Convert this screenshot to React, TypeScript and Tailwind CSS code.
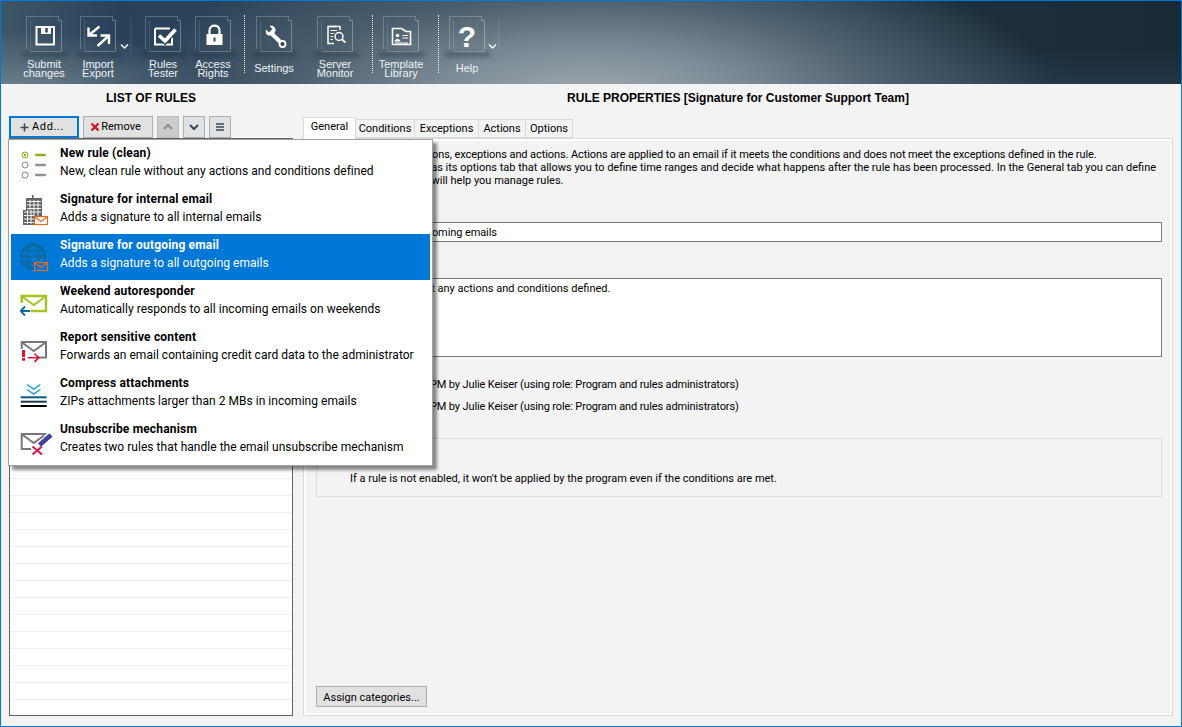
const font = "font-['Roboto',sans-serif]"

function Frame({ children }: { children?: React.ReactNode }) {
  return (
    <div className="relative h-[36px] w-[36px]">
      <svg width="36" height="42" viewBox="0 0 36 42" className="block" fill="none">
        <path d="M0.5 33V0.5H32.5" stroke="#fff" strokeOpacity="0.22" />
        <path d="M32.5 0.5V4.5" stroke="#fff" strokeOpacity="0.22" />
        <path d="M4.5 35.5H35.5V4.5H32.5" stroke="#fff" strokeOpacity="0.3" />
        <path d="M4.5 4.5V35.5" stroke="#fff" strokeOpacity="0.12" />
        {children}
      </svg>
      <div className="absolute left-[-4px] top-[36px] h-[5px] w-[46px] rounded-full bg-[#1c2f40]/40 blur-[2px]" />
    </div>
  )
}

function ToolButton({ w, label, children, ml = '' }: { w: string; label: string[]; children?: React.ReactNode; ml?: string }) {
  return (
    <div className={`flex flex-col items-center ${w} ${ml}`}>
      <Frame>{children}</Frame>
      <div className={`flex h-[20px] flex-col items-center justify-center font-['Liberation_Sans',sans-serif] text-[11px] leading-[9px] text-[#eef2f5] whitespace-nowrap ${label.length === 1 ? 'mt-[6px]' : 'mt-[7px]'}`}>
        {label.map((l) => (
          <span key={l} className="block h-[9px]">{l}</span>
        ))}
      </div>
    </div>
  )
}

function Chevron({ className }: { className: string }) {
  return (
    <svg width="16" height="36" viewBox="0 0 16 36" className={className} fill="none">
      <path d="M15 2V36" stroke="#fff" strokeOpacity="0.12" />
      <path d="M5 28.5L8.5 32L12 28.5" stroke="#fff" strokeWidth="1.3" />
    </svg>
  )
}

function Dots({ className }: { className: string }) {
  return <div className={`h-[58px] w-0 border-l border-dotted border-white/90 ${className}`} />
}

function Toolbar() {
  return (
    <div className="flex h-[83px] items-start bg-[#1a2a36] bg-[radial-gradient(ellipse_470px_160px_at_590px_100px,#a3adb5_0%,#7a8994_35%,#4b5e6d_65%,#4b5e6d00_100%),radial-gradient(ellipse_240px_60px_at_0px_90px,#71848f_0%,#71848f00_100%),linear-gradient(to_bottom,#1a2a3600_0%,#1a2a3600_55%,#2a405580_100%),linear-gradient(to_right,#3f5668_0%,#29425a_10%,#2f4558_30%,#34495a_50%,#1f3342_72%,#1a2a36_100%)] pl-[16px] pt-[15px]">
      <ToolButton w="w-[54px]" label={['Submit', 'changes']}>
        <path d="M10.5 11H28V28.5H10.5Z" stroke="#fff" strokeWidth="2" />
        <path d="M15 10.5H25V18H15Z" fill="#fff" />
        <path d="M20.5 12V16.5" stroke="#2f4659" strokeWidth="2.5" />
      </ToolButton>
      <ToolButton w="w-[54px]" label={['Import', 'Export']}>
        <path d="M8.5 11.5V19.5H17M8.5 19.5L19.5 10.5" stroke="#fff" strokeWidth="2.4" />
        <path d="M20.5 19.5H29V28M29 19.5L17.5 30" stroke="#fff" strokeWidth="2.4" />
      </ToolButton>
      <Chevron className="ml-[-9px]" />
      <ToolButton w="w-[46px]" ml="ml-[8px]" label={['Rules', 'Tester']}>
        <path d="M10 12.5H25M10 12.5V28.5H27V19" stroke="#fff" strokeWidth="2" />
        <path d="M14 19.5L20 25L30.5 13.5" stroke="#2f4659" strokeWidth="6.5" />
        <path d="M14 19.5L20 25L30.5 13.5" stroke="#fff" strokeWidth="3.6" />
      </ToolButton>
      <ToolButton w="w-[46px]" ml="ml-[4px]" label={['Access', 'Rights']}>
        <rect x="11.5" y="18" width="16" height="11" fill="#fff" />
        <path d="M14.5 18.5V14.5C14.5 8 24.5 8 24.5 14.5V18.5" stroke="#fff" strokeWidth="2.2" />
        <rect x="18.5" y="21.5" width="2" height="4" fill="#2f4659" />
      </ToolButton>
      <Dots className="ml-[8px] mt-[-1px]" />
      <ToolButton w="w-[46px]" ml="ml-[6px]" label={['Settings']}>
        <path d="M15 17L26.5 28" stroke="#fff" strokeWidth="4" />
        <path d="M10 13.5L13 16.5L16.5 13L13.5 10C16.5 9 20 11 19.5 15L18 18L14 19.5C11 20 9 17 10 13.5Z" fill="#fff" />
        <circle cx="26.5" cy="28" r="3" stroke="#fff" strokeWidth="1.8" fill="#2f4659" />
      </ToolButton>
      <ToolButton w="w-[46px]" ml="ml-[15px]" label={['Server', 'Monitor']}>
        <path d="M19 10.5H11V27.5H17" stroke="#fff" strokeWidth="1.5" />
        <path d="M11 10.5H23V14" stroke="#fff" strokeWidth="1.5" />
        <path d="M13.5 14.5H20M13.5 17.5H17M13.5 20.5H16M13.5 23.5H16" stroke="#fff" strokeWidth="1.2" />
        <circle cx="22" cy="20.5" r="4" stroke="#fff" strokeWidth="1.5" />
        <path d="M25 23.5L28.5 26.5" stroke="#fff" strokeWidth="1.8" />
      </ToolButton>
      <Dots className="ml-[14px] mt-[-1px]" />
      <ToolButton w="w-[50px]" ml="ml-[3px]" label={['Template', 'Library']}>
        <path d="M9.5 12.5H18.5L23 15.5H27.5V28.5H9.5Z" stroke="#fff" strokeWidth="1.6" />
        <circle cx="14.5" cy="19.5" r="1.8" fill="#fff" />
        <path d="M11.5 25.5C11.5 22 17.5 22 17.5 25.5Z" fill="#fff" />
        <path d="M19.5 19.5H25M19.5 22H25M12 27H25" stroke="#fff" strokeWidth="1.1" />
      </ToolButton>
      <Dots className="ml-[12px] mt-[-1px]" />
      <ToolButton w="w-[38px]" ml="ml-[9px]" label={['Help']}>
        <text x="18" y="31" textAnchor="middle" fill="#fff" fontSize="30" fontWeight="700" fontFamily="Liberation Sans, sans-serif">?</text>
      </ToolButton>
      <Chevron className="ml-[-2px]" />
    </div>
  )
}

function IconClean() {
  return (
    <svg width="32" height="32" viewBox="0 0 32 32" fill="none">
      <circle cx="5" cy="5" r="3" stroke="#8fb01a" strokeWidth="1" />
      <circle cx="5" cy="5" r="1.2" fill="#8fb01a" />
      <rect x="15" y="3.7" width="11" height="2.6" rx="1.3" fill="#8fb01a" />
      <circle cx="5" cy="15" r="3" stroke="#888" strokeWidth="1" />
      <rect x="15" y="13.7" width="11" height="2.6" rx="1.3" fill="#909090" />
      <circle cx="5" cy="25" r="3" stroke="#888" strokeWidth="1" />
      <rect x="15" y="23.7" width="11" height="2.6" rx="1.3" fill="#909090" />
    </svg>
  )
}

function IconBuilding() {
  return (
    <svg width="32" height="32" viewBox="0 0 32 32" fill="none" className="overflow-visible">
      <rect x="12" y="-1" width="1.6" height="3" fill="#666" />
      <path d="M6 2H22V21H15V29H3V14H6Z" fill="#666" />
      <path d="M7 5.5H21M7 9H21M7 12.5H21M4 16H21M4 19.5H14M4 23H14M4 26.5H14M10 4V14M14 4V20M18 4V20M7.5 14V28M11 14V28" stroke="#fff" strokeWidth="0.9" />
      <rect x="14.5" y="20.5" width="13" height="8" fill="#fff" stroke="#e8681e" strokeWidth="1.2" />
      <path d="M15 21L21 25.5L27 21" stroke="#e8681e" strokeWidth="1.2" />
    </svg>
  )
}

function IconGlobe() {
  return (
    <svg width="32" height="32" viewBox="0 0 32 32" fill="none">
      <circle cx="13" cy="14.5" r="12" stroke="#0b6a9a" strokeWidth="2.4" />
      <ellipse cx="13" cy="14.5" rx="5.5" ry="12" stroke="#0b6a9a" strokeWidth="1.8" />
      <path d="M1 14.5H25M3 8.5H23M3 20.5H23" stroke="#0b6a9a" strokeWidth="1.8" />
      <rect x="14.5" y="20.5" width="13" height="8" fill="#0078d7" stroke="#e8681e" strokeWidth="1.2" />
      <path d="M15 21L21 25.5L27 21" stroke="#e8681e" strokeWidth="1.2" />
    </svg>
  )
}

function IconReply() {
  return (
    <svg width="32" height="32" viewBox="0 0 32 32" fill="none">
      <path d="M1.7 15V8H26V23H11" stroke="#a5c31e" strokeWidth="2.4" />
      <path d="M2 8.5L13.8 17L25.5 8.5" stroke="#a5c31e" strokeWidth="2" />
      <path d="M0.5 23H10M0.5 23L5 18.5M0.5 23L5 27.5" stroke="#0b6a9a" strokeWidth="1.8" />
    </svg>
  )
}

function IconReport() {
  return (
    <svg width="32" height="32" viewBox="0 0 32 32" fill="none">
      <path d="M1.7 15V8H26V23.5H18" stroke="#777" strokeWidth="2" />
      <path d="M2 8.5L13.8 17L25.5 8.5" stroke="#777" strokeWidth="2" />
      <rect x="2" y="16" width="3" height="7" fill="#e8112d" />
      <rect x="2" y="24" width="3" height="2.7" fill="#e8112d" />
      <path d="M8 23.7H18.5M14.5 19.5L18.7 23.7L14.5 27.9" stroke="#e8112d" strokeWidth="1.6" />
    </svg>
  )
}

function IconCompress() {
  return (
    <svg width="32" height="32" viewBox="0 0 32 32" fill="none">
      <path d="M7 4.5L13.7 9L20.4 4.5M7 9.5L13.7 14L20.4 9.5" stroke="#1a9ad6" strokeWidth="1.5" />
      <path d="M0.7 17.3H26.7" stroke="#0b5a80" strokeWidth="2" />
      <path d="M0.7 21.7H26.7" stroke="#1c3a52" strokeWidth="2" />
      <path d="M0.7 26H26.7" stroke="#000" strokeWidth="2" />
    </svg>
  )
}

function IconUnsubscribe() {
  return (
    <svg width="32" height="32" viewBox="0 0 32 32" fill="none" className="overflow-visible">
      <path d="M11 23H1.7V8H26" stroke="#777" strokeWidth="2" />
      <path d="M2 8.5L13.8 17L24 9.5" stroke="#777" strokeWidth="2" />
      <path d="M19.5 19L31 9" stroke="#3f3f9f" strokeWidth="4.4" />
      <path d="M12.5 20.5L22 28.5M22 20.5L12.5 28.5" stroke="#e0164e" strokeWidth="2" />
    </svg>
  )
}

const menuItems = [
  { title: 'New rule (clean)', desc: 'New, clean rule without any actions and conditions defined', icon: <IconClean /> },
  { title: 'Signature for internal email', desc: 'Adds a signature to all internal emails', icon: <IconBuilding /> },
  { title: 'Signature for outgoing email', desc: 'Adds a signature to all outgoing emails', icon: <IconGlobe />, active: true },
  { title: 'Weekend autoresponder', desc: 'Automatically responds to all incoming emails on weekends', icon: <IconReply /> },
  { title: 'Report sensitive content', desc: 'Forwards an email containing credit card data to the administrator', icon: <IconReport /> },
  { title: 'Compress attachments', desc: 'ZIPs attachments larger than 2 MBs in incoming emails', icon: <IconCompress /> },
  { title: 'Unsubscribe mechanism', desc: 'Creates two rules that handle the email unsubscribe mechanism', icon: <IconUnsubscribe /> },
]

function AddMenu() {
  return (
    <div className="absolute left-[7px] top-[138px] z-10 w-[425px] border border-[#a0a0a0] bg-white px-[2px] pb-[1px] pt-[2px] shadow-[4px_4px_3px_rgba(0,0,0,0.45)]">
      {menuItems.map((m) => (
        <div key={m.title} className={`flex h-[46px] items-start pl-[9px] ${m.active ? 'bg-[#0078d7] text-white' : 'text-black'}`}>
          <div className="mt-[8px] w-[40px] shrink-0">{m.icon}</div>
          <div className="pt-[2px] text-[12px] leading-[18px]">
            <div className="font-bold tracking-[0.18px]">{m.title}</div>
            <div className="tracking-[0.03px]">{m.desc}</div>
          </div>
        </div>
      ))}
    </div>
  )
}

function ListPane() {
  return (
    <div className="flex w-[302px] shrink-0 flex-col pl-[8px]">
      <div className="h-[32px] w-[284px] pt-[5px] text-center font-['Liberation_Sans',sans-serif] text-[12px] font-bold leading-[18px]">LIST OF RULES</div>
      <div className="flex h-[22px] gap-[4px] text-[11px]">
        <button className="flex w-[70px] items-center justify-center gap-[3px] border-2 border-[#0078d7] bg-[#e1e1e1] pr-[4px] tracking-[0.6px]">
          <svg width="9" height="9" viewBox="0 0 9 9"><path d="M4.5 0.5V8.5M0.5 4.5H8.5" stroke="#3c4650" strokeWidth="1.6" /></svg>
          Add...
        </button>
        <button className="flex w-[70px] items-center justify-center gap-[1px] border border-[#adadad] bg-[#e1e1e1] pr-[5px]">
          <svg width="10" height="10" viewBox="0 0 10 10"><path d="M1.5 1.5L8.5 8.5M8.5 1.5L1.5 8.5" stroke="#d0101c" strokeWidth="2.2" /></svg>
          Remove
        </button>
        <button className="flex w-[22px] items-center justify-center border border-[#bbb] bg-[#cccccc]">
          <svg width="10" height="8" viewBox="0 0 10 8" fill="none"><path d="M1 6L5 2L9 6" stroke="#8a8a8a" strokeWidth="2" /></svg>
        </button>
        <button className="flex w-[22px] items-center justify-center border border-[#adadad] bg-[#e1e1e1]">
          <svg width="10" height="8" viewBox="0 0 10 8" fill="none"><path d="M1 2L5 6L9 2" stroke="#34495c" strokeWidth="2" /></svg>
        </button>
        <button className="flex w-[22px] items-center justify-center border border-[#adadad] bg-[#e1e1e1]">
          <svg width="10" height="8" viewBox="0 0 10 8"><path d="M1 1H9M1 4H9M1 7H9" stroke="#34495c" strokeWidth="1.6" /></svg>
        </button>
      </div>
      <div className="h-[578px] w-[284px] overflow-hidden border border-[#646464] bg-white">
        {Array.from({ length: 34 }).map((_, i) => (
          <div key={i} className="h-[17px] border-b border-[#efefef]" />
        ))}
      </div>
    </div>
  )
}

function PropsPane() {
  return (
    <div className="flex min-w-0 flex-1 flex-col pr-[8px]">
      <div className="h-[32px] pt-[5px] text-center font-['Liberation_Sans',sans-serif] text-[12px] font-bold leading-[18px]">
        RULE PROPERTIES [Signature for Customer Support Team]
      </div>
      <div className="flex h-[22px] items-end text-[11px] leading-[18px]">
        <div className="z-[1] mb-[-1px] h-[22px] w-[53px] border border-b-0 border-[#d9d9d9] bg-white text-center">General</div>
        <div className="h-[19px] w-[59px] border border-l-0 border-[#d9d9d9] bg-[#f3f3f3] text-center">Conditions</div>
        <div className="h-[19px] w-[64px] border border-l-0 border-[#d9d9d9] bg-[#f3f3f3] text-center">Exceptions</div>
        <div className="h-[19px] w-[47px] border border-l-0 border-[#d9d9d9] bg-[#f3f3f3] text-center">Actions</div>
        <div className="h-[19px] w-[47px] border border-l-0 border-[#d9d9d9] bg-[#f3f3f3] text-center">Options</div>
      </div>
      <div className="flex h-[578px] flex-col border border-[#d9d9d9] bg-[#f3f3f3] pl-[12px] pr-[10px] text-[11px] leading-[13px] outline-2 outline-offset-[-3px] outline-white">
        <div className="whitespace-nowrap pt-[9px]">
          <p className="tracking-[-0.09px]">Every rule has its conditions, exceptions and actions. Actions are applied to an email if it meets the conditions and does not meet the exceptions defined in the rule.</p>
          <p>Additionally, each rule has its options tab that allows you to define time ranges and decide what happens after the rule has been processed. In the General tab you can define</p>
          <p>the rule categories that will help you manage rules.</p>
        </div>
        <div className="mt-[11px] h-[13px]">Rule name:</div>
        <div className="mt-[11px] h-[20px] border border-[#7a7a7a] bg-white pl-[5px] pt-[1px] leading-[18px] tracking-[-0.1px]">Default signature in incoming emails</div>
        <div className="mt-[20px] h-[16px]">Description:</div>
        <div className="h-[79px] border border-[#7a7a7a] bg-white pl-[5px] pt-[2px] leading-[16px]">New, clean rule without any actions and conditions defined.</div>
        <div className="mt-[21px] flex h-[14px] leading-[14px] tracking-[-0.13px]">
          <span className="w-[49px]">Created:</span>
          <span>3/12/22 4:15 PM by Julie Keiser (using role: Program and rules administrators)</span>
        </div>
        <div className="mt-[8px] flex h-[14px] leading-[14px] tracking-[-0.13px]">
          <span className="w-[49px]">Modified:</span>
          <span>3/12/22 4:12 PM by Julie Keiser (using role: Program and rules administrators)</span>
        </div>
        <div className="mt-[24px] h-[59px] border border-[#dddddd] pl-[33px]">
          <div className="pt-[9px] leading-[14px]">Rule is enabled</div>
          <div className="mt-[10px] leading-[14px]">If a rule is not enabled, it won't be applied by the program even if the conditions are met.</div>
        </div>
        <button className="mt-[189px] h-[21px] w-[111px] border border-[#adadad] bg-[#e1e1e1] pt-[1px] text-center">Assign categories...</button>
      </div>
    </div>
  )
}

export default function App() {
  return (
    <div className={`relative flex h-[727px] w-[1182px] flex-col overflow-hidden border border-[#0078d7] bg-[#f3f3f3] text-black ${font}`}>
      <Toolbar />
      <div className="flex flex-1">
        <ListPane />
        <PropsPane />
      </div>
      <AddMenu />
    </div>
  )
}
